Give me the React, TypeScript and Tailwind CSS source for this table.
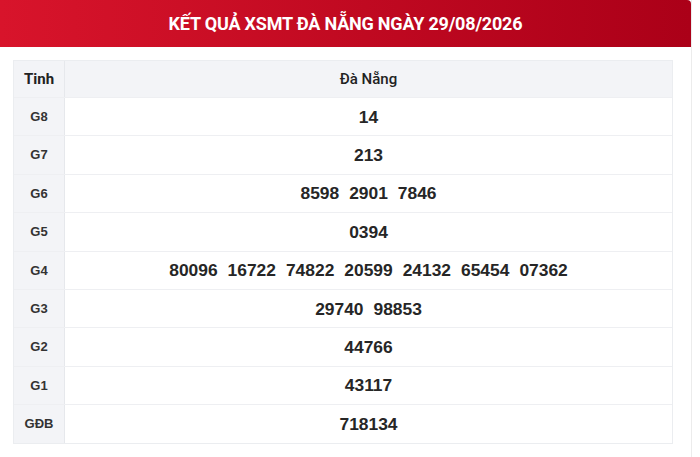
import React from "react";

const rows: { label: string; nums: string[] }[] = [
  { label: "G8", nums: ["14"] },
  { label: "G7", nums: ["213"] },
  { label: "G6", nums: ["8598", "2901", "7846"] },
  { label: "G5", nums: ["0394"] },
  { label: "G4", nums: ["80096", "16722", "74822", "20599", "24132", "65454", "07362"] },
  { label: "G3", nums: ["29740", "98853"] },
  { label: "G2", nums: ["44766"] },
  { label: "G1", nums: ["43117"] },
  { label: "GĐB", nums: ["718134"] },
];

export default function App() {
  return (
    <div className="w-[700px] h-[457px] overflow-hidden bg-white">
      <div className="w-[692px] h-[457px] border-r border-[#ececec] bg-white">
        <div className="h-[47px] rounded-tr-[4px] bg-gradient-to-r from-[#d8142b] to-[#ab0018] flex items-center justify-center">
          <span className="text-white font-bold text-[18px] tracking-[-0.2px] [font-family:'Roboto',sans-serif]">
            KẾT QUẢ XSMT ĐÀ NẴNG NGÀY 29/08/2026
          </span>
        </div>
        <div className="pt-[13px] pl-[13px] pr-[18px]">
          <div className="border border-[#ebedf0] [font-family:'Liberation_Sans',Arial,sans-serif]">
            <div className="flex h-[36px] bg-[#f3f4f7]">
              <div className="w-[51px] flex items-center justify-center border-r border-[#e6e8ec] text-[15px] font-bold text-[#222] [font-family:'Roboto',sans-serif]">
                Tinh
              </div>
              <div className="flex-1 flex items-center justify-center text-[15px] font-medium text-[#222] [font-family:'Roboto',sans-serif]">
                Đà Nẵng
              </div>
            </div>
            {rows.map((r) => (
              <div key={r.label} className="flex h-[38.4px] border-t border-[#eeeff2]">
                <div className="w-[51px] bg-[#f3f4f7] border-r border-[#e6e8ec] flex items-center justify-center text-[13px] font-bold text-[#333]">
                  {r.label}
                </div>
                <div className="flex-1 flex items-center justify-center gap-[10px] text-[17.4px] font-bold text-[#262626]">
                  {r.nums.map((n, i) => (
                    <span key={i}>{n}</span>
                  ))}
                </div>
              </div>
            ))}
          </div>
        </div>
      </div>
    </div>
  );
}
